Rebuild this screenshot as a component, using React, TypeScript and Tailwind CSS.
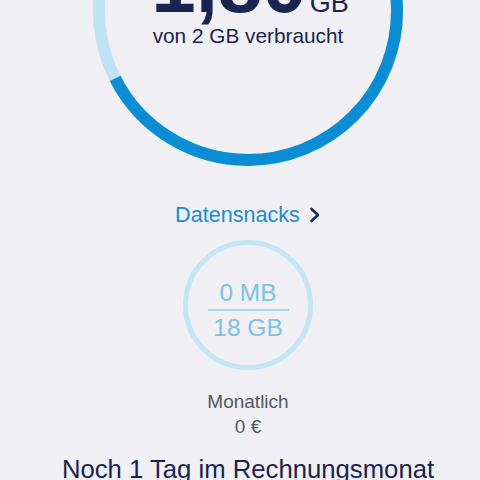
import React from 'react'

const C = 2 * Math.PI * 149

export default function App() {
  const used = 0.675
  return (
    <div className="w-[480px] h-[480px] overflow-hidden bg-[#efeff4] pl-4 flex flex-col items-center font-['Liberation_Sans',Arial,sans-serif]">
      <div className="relative w-[310px] h-[310px] mt-[-144px] shrink-0">
        <svg width="310" height="310" viewBox="0 0 310 310" className="absolute inset-0">
          <circle cx="155" cy="155" r="149" fill="none" stroke="#c0e3f4" strokeWidth="12" />
          <circle
            cx="155"
            cy="155"
            r="149"
            fill="none"
            stroke="#0b8dd3"
            strokeWidth="12"
            strokeDasharray={`${used * C} ${C}`}
            transform="rotate(-90 155 155)"
          />
        </svg>
        <div className="absolute inset-x-0 top-[89px] flex flex-col items-center text-[#1b2350]">
          <div className="flex items-baseline pl-1">
            <span className="text-[80px] leading-none font-bold">1,80</span>
            <span className="text-[27px] leading-none ml-[3px]">GB</span>
          </div>
          <p className="text-[20.8px] leading-[24px] mt-[-1px]">von 2 GB verbraucht</p>
        </div>
      </div>

      <div className="flex items-center mt-[37px] h-[24px]">
        <span className="text-[21.6px] leading-[24px] text-[#1b8dd1]">Datensnacks</span>
        <svg width="12" height="16" viewBox="0 0 12 16" className="ml-[9px]">
          <polyline points="2.5,2 9,8 2.5,14" fill="none" stroke="#1b2350" strokeWidth="2.6" strokeLinecap="round" strokeLinejoin="round" />
        </svg>
      </div>

      <div className="mt-[13px] w-[130px] h-[130px] shrink-0 rounded-full border-[5px] border-[#c4e5f5] flex flex-col items-center pt-[34px] text-[#7dc1e5]">
        <span className="text-[24.5px] leading-[28px]">0 MB</span>
        <div className="w-[81px] h-[2px] bg-[#a8d8f0] mt-[2px]" />
        <span className="text-[24.5px] leading-[28px] mt-[3px]">18 GB</span>
      </div>

      <div className="mt-[19px] flex flex-col items-center text-[#55595f] text-[19px] leading-[25px]">
        <span>Monatlich</span>
        <span>0 €</span>
      </div>

      <p className="mt-[15px] text-[25.7px] leading-[30px] text-[#1b2350] whitespace-nowrap">Noch 1 Tag im Rechnungsmonat</p>
    </div>
  )
}
